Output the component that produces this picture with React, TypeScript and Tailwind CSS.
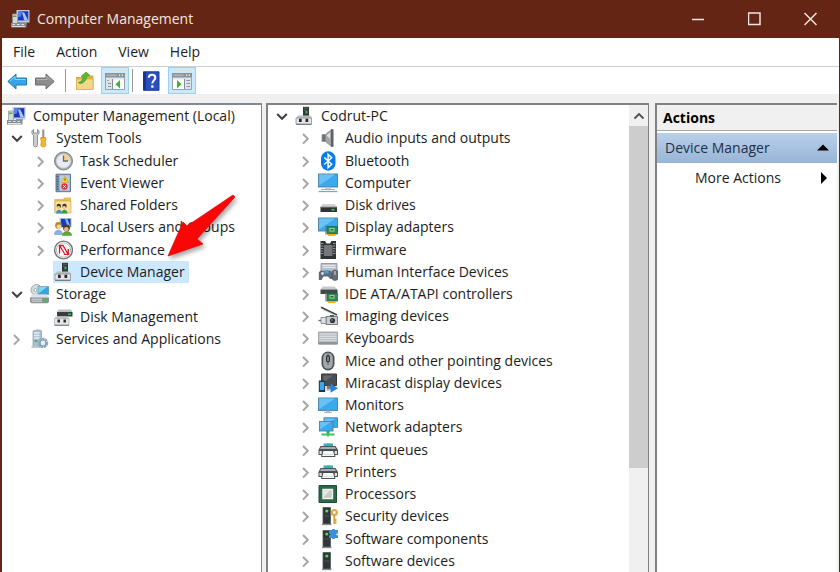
import { useState } from 'react';
import type { ReactNode } from 'react';
import clsx from 'clsx';

type Node = {
  label: string;
  icon: ReactNode;
  level: 0 | 1 | 2;
  state?: 'open' | 'closed';
};

const Svg = ({ children }: { children: ReactNode }) => (
  <svg viewBox="0 0 20 20" className="size-5 shrink-0" aria-hidden="true">
    {children}
  </svg>
);

const ManagementIcon = () => (
  <Svg>
    <path d="M6.500 1H19.500v12.500h-13z" fill="#c3ccd6" />
    <path d="M8 2.200h10.300v9.300H8z" fill="#1a36c8" />
    <path d="m8 2.200 4 0-1 5-3 1.300z" fill="#5b83e6" />
    <path d="m12 3.500 2-.2 4.300 8.200h-4z" fill="#a9c5f4" />
    <path d="M2.500 5h5v9.500h-5z" fill="#d4d8d2" stroke="#8b928c" strokeWidth=".7" />
    <path d="M3 6.500h3.500V8H3z" fill="#59a84a" />
    <path d="M10 13h7v1.500h-7z" fill="#8c98a5" />
    <path d="M1 14h15.500v4.500H1z" fill="#858e95" />
    <path d="M2.500 15.500h2.500M7 15.500h2.500M11.500 15.500H14M2 17.500h13" stroke="#dfe4e7" strokeWidth="1" />
  </Svg>
);

const ToolsIcon = () => (
  <Svg>
    <path
      d="M4.500 1.500C2.400 2.500 2.200 5.700 4.600 7.300v10.200c0 1.800 3.800 1.800 3.800 0V7.300c2.300-1.600 2.200-4.800.2-5.800v3.600H4.500z"
      fill="#cfd3d6"
      stroke="#7d8286"
      strokeWidth=".9"
    />
    <path d="M13.300 1.500h2V10h-2z" fill="#8b9094" />
    <path d="M11.800 9.500h5v2.500l-.8 1 .8 4.500c0 1.800-5 1.800-5 0l.7-4.500-.7-1z" fill="#f5b62b" stroke="#d68f12" strokeWidth=".8" />
  </Svg>
);

const ClockIcon = () => (
  <Svg>
    <circle cx="10.500" cy="10" r="9" fill="#a3a6a9" stroke="#75797d" strokeWidth=".9" />
    <circle cx="10.500" cy="10" r="7" fill="#e6ecf1" stroke="#d1d4d6" strokeWidth="1" />
    <path d="M10.500 10V3.500A6.500 6.500 0 0 1 17 10z" fill="#f8d08a" />
    <path d="M10.500 4.500V10H15" fill="none" stroke="#5d6b7a" strokeWidth="1.300" />
  </Svg>
);

const EventIcon = () => (
  <Svg>
    <path d="M3 1.200h14.500v17.500H3z" fill="#7c93aa" stroke="#627c98" />
    <path d="M6.500 2.200h10.200v15.500H6.500z" fill="#b9cee2" />
    <path d="M3.500 3.500h2M3.500 6h2M3.500 8.500h2M3.500 11h2M3.500 13.500h2M3.500 16h2" stroke="#43566a" strokeWidth=".9" />
    <path d="m12 3 3.700 6.500H8.300z" fill="#ffd42d" stroke="#c59512" strokeWidth=".5" />
    <path d="M12 5.300v2.500" stroke="#6b5200" />
    <circle cx="11.500" cy="13.500" r="3.200" fill="#d93648" />
    <path d="m10.200 12.200 2.600 2.600m0-2.600-2.600 2.600" stroke="#fff" strokeWidth=".9" />
  </Svg>
);

const SharedIcon = () => (
  <Svg>
    <path d="M1.500 4H10l1.500-1.500H18V18H1.500z" fill="#e5bd55" />
    <path d="M2 6h16v12H2z" fill="#f7e0a0" stroke="#d9ab3d" strokeWidth=".7" />
    <path d="M3 18.500c0-5 6-5 6 0z" fill="#3f93c4" />
    <path d="M8.500 18.500c0-5 6-5 6 0z" fill="#3a9c50" />
    <circle cx="5.800" cy="11" r="2.200" fill="#3f3220" />
    <circle cx="5.500" cy="12.200" r="1.500" fill="#eec597" />
    <circle cx="11.500" cy="11" r="2.200" fill="#3f3220" />
    <circle cx="11.200" cy="12.200" r="1.500" fill="#eec597" />
  </Svg>
);

const UsersIcon = () => (
  <Svg>
    <path d="M6.500 1h12v9.500h-12z" fill="#aab8c8" />
    <path d="M8 2h9.500v8H8z" fill="#1538ce" />
    <path d="m12 2 2.500.2 3 7.800h-3z" fill="#86b1f4" />
    <path d="M1 18c0-7 9-7 9 0z" fill="#8db4d8" />
    <path d="M9 18.800c0-6 10-6 10 0z" fill="#58a53c" />
    <circle cx="5.500" cy="8.500" r="3.400" fill="#b28b2c" />
    <circle cx="6" cy="9.800" r="2.300" fill="#f6d5a2" />
    <circle cx="13.500" cy="11" r="3.400" fill="#4d3928" />
    <circle cx="13.300" cy="12.300" r="2.300" fill="#e9b67f" />
  </Svg>
);

const PerformanceIcon = () => (
  <Svg>
    <circle cx="10.500" cy="10" r="8.900" fill="#fff" stroke="#6f7579" strokeWidth="1.400" />
    <circle cx="10.500" cy="10" r="7.100" fill="#fff" stroke="#b4b9bc" strokeWidth="1" />
    <path d="M6.500 5v8.500M6.500 5.500l3.500 0 5 8.500M15.300 9v5.300h-4.500M6.500 5.500l5 8" fill="none" stroke="#d71920" strokeWidth="1.300" />
  </Svg>
);

const DeviceIcon = () => (
  <Svg>
    <path d="M9 .8h6v9.500H9z" fill="#303633" />
    <path d="M10 2.200h4M10 4.200h1.500" stroke="#6b746f" strokeWidth=".8" />
    <path d="M11.500 4.500h2v3h-2z" fill="#43b05d" />
    <path d="M4 9.500h12.500l1.500 3H2z" fill="#b9bec2" />
    <path d="M2 12h15.500v6H2z" fill="#e3e5e6" stroke="#8b9093" strokeWidth=".8" />
    <path d="M5 12.800h2.700v3.200H5zM11.500 12.800h2.700v3.200h-2.700z" fill="#26292b" />
    <path d="M2 18.500h15.500" stroke="#777d80" />
  </Svg>
);

const StorageIcon = () => (
  <Svg>
    <circle cx="7.500" cy="6" r="5.500" fill="#d3dbe0" stroke="#919ca3" strokeWidth=".8" />
    <circle cx="6.500" cy="6" r="1.500" fill="#fff" stroke="#7e8a91" strokeWidth=".6" />
    <path d="M9 2.500h11v8H9z" fill="#35a6dc" stroke="#8ea4b1" strokeWidth=".9" />
    <path d="M9.500 3H18l-8.500 6.500z" fill="#84d5f4" />
    <path d="M2.500 10.500h15.500l2 3.500H1z" fill="#e0e3e5" />
    <path d="M1 13.500h19V18l-1.500 1.200h-16L1 18z" fill="#8b9195" />
    <path d="M2.500 15.200H13M2.500 17.200H13" stroke="#dfe2e4" strokeWidth="1" />
    <path d="M15 15.500h3.500v1.800H15z" fill="#34c54a" />
  </Svg>
);

const DiskManagementIcon = () => (
  <Svg>
    <path d="M5.500 2.500h12.500l1.500 2.500H4z" fill="#bcc1c4" />
    <path d="M4 5h15.500v4.500H4z" fill="#383e3f" />
    <path d="M15 6.500h3v1.500h-3z" fill="#38bd49" />
    <path d="M3 9.500h11.500l1.500 2H1.500z" fill="#c1c5c8" />
    <path d="M1.500 11.500H16v6.500H1.500z" fill="#e4e6e7" stroke="#a4a9ac" strokeWidth=".7" />
    <path d="M4.500 12.500h2.500v3H4.500zM10.500 12.500H13v3h-2.500z" fill="#2c3032" />
    <path d="M1.500 18.300H16" stroke="#74797c" />
  </Svg>
);

const ServicesIcon = () => (
  <Svg>
    <path d="m4 2 5-1.300 3.500 1.100V18H4z" fill="#a9bfcd" stroke="#7895a8" strokeWidth=".6" />
    <path d="M5 4h5.500M5 6.500h5.500M5 9h5.500" stroke="#e3eef4" strokeWidth="1.300" />
    <path d="M5.500 12h3" stroke="#38a56d" strokeWidth="1.500" />
    <path d="M2.500 17h8v2h-8z" fill="#bac9d3" />
    <circle cx="14" cy="14" r="4" fill="none" stroke="#91aabd" strokeWidth="2.500" strokeDasharray="2.300 .6" />
    <circle cx="14" cy="14" r="3" fill="#e6eff5" stroke="#7f9eb4" strokeWidth="1.200" />
  </Svg>
);

const AudioIcon = () => (
  <Svg>
    <path d="M4 6.500h3.500v7H4z" fill="#6b7073" stroke="#8e9295" strokeWidth=".8" />
    <path d="m7.500 6.500 6-5v17l-6-5z" fill="#a3a7aa" stroke="#7b8083" strokeWidth=".8" />
    <path d="m13 1.200 2.500 0v17.600H13z" fill="#5c6164" />
    <path d="m8.500 7.500 3.500-3v6z" fill="#dfe1e2" />
  </Svg>
);

const BluetoothIcon = () => (
  <Svg>
    <rect x="3" y=".3" width="14.500" height="19.400" rx="7.200" fill="#0a7bea" />
    <path d="m6.300 6.500 7.400 6.700-3.600 3.500V3.300l3.600 3.500-7.400 6.700" fill="none" stroke="#fff" strokeWidth="1.500" />
  </Svg>
);

const Screen = ({ x = 1, y = 2, w = 19, h = 13 }: { x?: number; y?: number; w?: number; h?: number }) => (
  <>
    <rect x={x} y={y} width={w} height={h} fill="#3aa9ee" stroke="#4a7fa3" strokeWidth=".9" />
    <path d={`M${x + 0.6} ${y + 0.6}h${w - 3}L${x + 0.6} ${y + h - 1.5}z`} fill="#68c2f8" />
  </>
);

const ComputerIcon = () => (
  <Svg>
    <Screen x={0.5} y={1} h={13} />
    <path d="M7 14.500h6V16H7z" fill="#c5ccd2" />
    <path d="M3 16.500h14" stroke="#a9b3bb" />
    <path d="M.5 18.500h19" stroke="#8fa3b3" strokeWidth="1.300" />
  </Svg>
);

const MonitorIcon = () => (
  <Svg>
    <Screen x={0.5} y={3} h={12.5} />
    <path d="M8 15.500h4v1.200H8z" fill="#a6afb7" />
    <path d="M6 17.300h8" stroke="#9aa5ae" />
  </Svg>
);

const DiskIcon = () => (
  <Svg>
    <path d="M4.500 9h12L19 12H2.500z" fill="#d0d3d5" />
    <path d="M2.500 12H19v5H2.500z" fill="#2e3435" />
    <path d="M2.500 12.200H19" stroke="#70767a" />
    <path d="M13.500 14h3v1.500h-3z" fill="#3fcb55" />
  </Svg>
);

const Card = () => (
  <>
    <path d="M9 9.500h10.500v7.500H9z" fill="#2c8c55" stroke="#176339" strokeWidth=".7" />
    <path d="M11.500 11h5v3.500h-5z" fill="#8ddc9c" />
    <path d="M12.500 12h3v1.500h-3z" fill="#35594a" />
    <path d="M10 17h7.500v2H10z" fill="#efae28" />
    <path d="M8 8.500v9" stroke="#697278" strokeWidth="1.100" />
  </>
);

const DisplayIcon = () => (
  <Svg>
    <Screen x={0.5} y={1} h={13} />
    <Card />
  </Svg>
);

const FirmwareIcon = () => (
  <Svg>
    <path d="M2.500 1h4.500l1.500 2.500h3.500L13.500 1H18v18H2.500z" fill="#303336" />
    <path d="M6 5h8.500v11H6z" fill="#74787b" />
    <path d="M3 3.500h2.500M3 6h2.500M3 8.500h2.500M3 11h2.500M3 13.500h2.500M15 3.500h2.500M15 6h2.500M15 8.500h2.500M15 11h2.500M15 13.500h2.500" stroke="#a9acae" strokeWidth=".8" />
  </Svg>
);

const HidIcon = () => (
  <Svg>
    <path d="M3 1.500h16V10H3z" fill="#b9bfc4" stroke="#858d93" strokeWidth=".8" />
    <path d="M4.500 3.500h13M4.500 5.500h13" stroke="#e9ecee" strokeWidth="1" />
    <path d="M.8 10.500C2 8 4 8 5.500 9h4.500c2-1.300 3.500-.5 4 2l.7 6h-2.500L10 14.500H5.500L3.500 18H.8z" fill="#626b75" />
    <circle cx="4.500" cy="11.500" r="1.400" fill="#d9e0e5" />
    <path d="M6.500 8h4v3.500h-4z" fill="#3da2e6" />
    <rect x="14" y="8" width="6" height="10.500" rx="3" fill="#666e75" stroke="#444b51" strokeWidth=".6" />
    <path d="M17 9v4" stroke="#d4d9dc" />
  </Svg>
);

const IdeIcon = () => (
  <Svg>
    <path d="M5 2.500h11.500l3 3H2.500z" fill="#c5cacd" />
    <path d="M2.500 5.500h17V10h-17z" fill="#424849" />
    <Card />
  </Svg>
);

const ImagingIcon = () => (
  <Svg>
    <path d="m3 1.200 16 7.800" stroke="#3e4346" strokeWidth="1.800" />
    <path d="m4.500 3.500 13 6" stroke="#bfc4c7" strokeWidth=".8" />
    <path d="M8 10.500h11.500v8H8z" fill="#c9cdcf" stroke="#696f73" strokeWidth=".9" />
    <path d="M3 11.500h5v6H3z" fill="#dfe2e3" stroke="#777d81" strokeWidth=".8" />
    <path d="M12 9h4v2h-4z" fill="#53595d" />
    <circle cx="14.500" cy="14.500" r="2.600" fill="#2f3538" />
    <circle cx="14" cy="14" r=".8" fill="#a4adb2" />
    <path d="M.5 14.500H3" stroke="#62686c" strokeWidth="1.300" />
  </Svg>
);

const KeyboardIcon = () => (
  <Svg>
    <path d="M.5 4h19v12H.5z" fill="#b7bcc0" stroke="#8b9196" strokeWidth=".7" />
    <path d="M1.500 6h17M1.500 8.300h17M1.500 10.500h17" stroke="#e3e6e8" strokeWidth="1.100" />
    <path d="M.5 13h19v3.500H.5z" fill="#8d959c" />
    <path d="M1 13h18" stroke="#fff" strokeWidth=".8" />
  </Svg>
);

const MouseIcon = () => (
  <Svg>
    <rect x="3.500" y=".5" width="13" height="19" rx="6.500" fill="#4a5056" />
    <rect x="5.200" y="1.800" width="9.600" height="16" rx="4.800" fill="#a0a7ad" />
    <path d="M10 2v12" stroke="#50575d" strokeWidth=".9" />
    <rect x="8" y="4" width="4" height="7.500" rx="2" fill="#2e3338" />
    <path d="M10 5.500v4.500" stroke="#cad1d6" />
  </Svg>
);

const MiracastIcon = () => (
  <Svg>
    <path d="M3.500 1h15v11.500h-15z" fill="#4b4f53" stroke="#35393c" />
    <path d="M5.500 2.500H15l-9.500 7z" fill="#64696e" />
    <path d="M9 13h4v3H9zM8 17h4" fill="#797e82" stroke="#797e82" strokeWidth=".6" />
    <path d="M.8 7.500h6.400V19H.8z" fill="#28343c" />
    <path d="M1.800 9h4.400v8H1.800z" fill="#37a7ef" />
    <path d="m12.500 10.500 7.500 4.700-7.500 4.500z" fill="#2682d9" />
  </Svg>
);

const NetworkIcon = () => (
  <Svg>
    <Screen x={6} y={0.8} w={13.5} h={9.5} />
    <Screen x={1.5} y={4.5} w={13.500} h={9.500} />
    <path d="M8.500 14h3v2.500h-3z" fill="#34a555" />
    <path d="M3.500 17.500h13M10 16v3.500" stroke="#3ac05c" strokeWidth="2" />
  </Svg>
);

const PrinterIcon = () => (
  <Svg>
    <path d="M5.500 3.500h9.500V7H5.500z" fill="#3fa6dd" />
    <path d="M9 3.500h4V6H9z" fill="#39b982" />
    <path d="M2.500 6h15l2.500 4v5H.5v-5z" fill="#4d5255" />
    <path d="M3 7h14l1 2H2z" fill="#a7adb0" />
    <path d="M5 10.500h10.500l1.500 6H3.500z" fill="#f6f8f9" stroke="#3a3f42" strokeWidth=".9" />
    <path d="M1.500 11h2.300v3H1.500zM16.700 11H19v3h-2.300z" fill="#dfe2e3" />
    <path d="M5.500 14.500h9.500" stroke="#d2dfe6" />
  </Svg>
);

const ProcessorIcon = () => (
  <Svg>
    <path d="M1 1.500h17.500v17H1z" fill="#2c6847" stroke="#1b5033" />
    <path d="M5 5.500h9.500v9H5z" fill="#c8ccc9" stroke="#f1f3f1" strokeWidth="1.400" />
    <path d="m6 6.500 6 0-6 6z" fill="#e6e9e7" />
  </Svg>
);

const Tower = () => (
  <>
    <path d="M5 1.500h7.500V18H5z" fill="#303536" stroke="#52585a" strokeWidth=".8" />
    <circle cx="8.800" cy="5" r="1.600" fill="#4ddd5c" />
    <path d="M6.500 10h4.500" stroke="#5b6163" strokeWidth=".8" />
    <path d="M4 18.500h9.500" stroke="#858b8e" strokeWidth="1.300" />
  </>
);

const SecurityIcon = () => (
  <Svg>
    <Tower />
    <circle cx="16.300" cy="6.500" r="2.500" fill="none" stroke="#e3a940" strokeWidth="2.200" />
    <path d="M16.300 9v9M16.300 14h2.200M16.300 16.500h2.200" stroke="#d9a036" strokeWidth="1.800" />
  </Svg>
);

const ComponentIcon = () => (
  <Svg>
    <Tower />
    <path d="M11 1h3.200V0h2.600v1H20v3.500h-1.500v1.700H20V9h-3.200v1h-2.600V9H11V6.200h1.500V4.500H11z" fill="#3a8edb" />
  </Svg>
);

const SoftwareIcon = () => (
  <Svg>
    <Tower />
  </Svg>
);

const consoleTree: Node[] = [
  { label: 'Computer Management (Local)', icon: <ManagementIcon />, level: 0 },
  { label: 'System Tools', icon: <ToolsIcon />, level: 1, state: 'open' },
  { label: 'Task Scheduler', icon: <ClockIcon />, level: 2, state: 'closed' },
  { label: 'Event Viewer', icon: <EventIcon />, level: 2, state: 'closed' },
  { label: 'Shared Folders', icon: <SharedIcon />, level: 2, state: 'closed' },
  { label: 'Local Users and Groups', icon: <UsersIcon />, level: 2, state: 'closed' },
  { label: 'Performance', icon: <PerformanceIcon />, level: 2, state: 'closed' },
  { label: 'Device Manager', icon: <DeviceIcon />, level: 2 },
  { label: 'Storage', icon: <StorageIcon />, level: 1, state: 'open' },
  { label: 'Disk Management', icon: <DiskManagementIcon />, level: 2 },
  { label: 'Services and Applications', icon: <ServicesIcon />, level: 1, state: 'closed' },
];

const deviceTree: Node[] = [
  { label: 'Codrut-PC', icon: <DeviceIcon />, level: 1, state: 'open' },
  { label: 'Audio inputs and outputs', icon: <AudioIcon />, level: 2, state: 'closed' },
  { label: 'Bluetooth', icon: <BluetoothIcon />, level: 2, state: 'closed' },
  { label: 'Computer', icon: <ComputerIcon />, level: 2, state: 'closed' },
  { label: 'Disk drives', icon: <DiskIcon />, level: 2, state: 'closed' },
  { label: 'Display adapters', icon: <DisplayIcon />, level: 2, state: 'closed' },
  { label: 'Firmware', icon: <FirmwareIcon />, level: 2, state: 'closed' },
  { label: 'Human Interface Devices', icon: <HidIcon />, level: 2, state: 'closed' },
  { label: 'IDE ATA/ATAPI controllers', icon: <IdeIcon />, level: 2, state: 'closed' },
  { label: 'Imaging devices', icon: <ImagingIcon />, level: 2, state: 'closed' },
  { label: 'Keyboards', icon: <KeyboardIcon />, level: 2, state: 'closed' },
  { label: 'Mice and other pointing devices', icon: <MouseIcon />, level: 2, state: 'closed' },
  { label: 'Miracast display devices', icon: <MiracastIcon />, level: 2, state: 'closed' },
  { label: 'Monitors', icon: <MonitorIcon />, level: 2, state: 'closed' },
  { label: 'Network adapters', icon: <NetworkIcon />, level: 2, state: 'closed' },
  { label: 'Print queues', icon: <PrinterIcon />, level: 2, state: 'closed' },
  { label: 'Printers', icon: <PrinterIcon />, level: 2, state: 'closed' },
  { label: 'Processors', icon: <ProcessorIcon />, level: 2, state: 'closed' },
  { label: 'Security devices', icon: <SecurityIcon />, level: 2, state: 'closed' },
  { label: 'Software components', icon: <ComponentIcon />, level: 2, state: 'closed' },
  { label: 'Software devices', icon: <SoftwareIcon />, level: 2, state: 'closed' },
];

function TreeRow({ node, selected, onSelect }: { node: Node; selected: boolean; onSelect: () => void }) {
  return (
    <li className={clsx('flex min-h-0 items-center', node.level === 2 && 'pl-6')}>
      {node.level > 0 &&
        (node.state ? (
          <button className="flex w-6 shrink-0 justify-center" aria-label={`Toggle ${node.label}`}>
            <svg viewBox="0 0 12 12" className="size-3" fill="none" aria-hidden="true">
              {node.state === 'open' ? (
                <path d="M1.200 4 6 8.800 10.800 4" stroke="#404040" strokeWidth="2" />
              ) : (
                <path d="m3 2 4.800 4.800L3 11.600" stroke="#a6a6a6" strokeWidth="2" />
              )}
            </svg>
          </button>
        ) : (
          <span className="w-6 shrink-0" />
        ))}
      <button
        onClick={onSelect}
        className={clsx(
          'flex h-full items-center gap-[7px] pr-1 whitespace-nowrap',
          node.level === 0 && 'pl-px',
          selected && 'bg-[#cce8ff]'
        )}
      >
        {node.icon}
        {node.label}
      </button>
    </li>
  );
}

// window glyph with the tree (or the action list) shown beside the content
function PaneIcon({ flip = false }: { flip?: boolean }) {
  return (
    <svg viewBox="0 0 20 18" className="h-[18px] w-5" aria-hidden="true">
      <path d="M.5 1.500h19v16H.5z" fill="#dfe4e8" stroke="#9ba3a9" />
      <path d="M0 1h20v4.500H0z" fill="#8b949b" />
      <path d="M1.500 3.200h10" stroke="#b6bdc2" strokeWidth="1.200" />
      <path d="M14 3.200h1.200M16.800 3.200H18" stroke="#fff" strokeWidth="1.200" />
      {flip ? (
        <>
          <path d="M1 7.500h11v9.500H1z" fill="#fff" />
          <path d="M12.500 7v10" stroke="#858d93" />
          <path d="M14.500 8.500h3.500M14.500 11.500h3.500M14.500 14.500h3.500" stroke="#7c93a8" strokeWidth="1.200" />
          <path d="m5 8 4.500 4.200L5 16.400z" fill="#3cb52f" />
        </>
      ) : (
        <>
          <path d="M8 7.500h11v9.500H8z" fill="#fff" />
          <path d="M7.500 7v10" stroke="#858d93" />
          <path d="M2 8.500h1.500M3 11.500h3M3 14.500h3" stroke="#7c93a8" strokeWidth="1.200" />
          <path d="m15 8-4.500 4.200 4.500 4.200z" fill="#3cb52f" />
        </>
      )}
    </svg>
  );
}

const Divider = () => <span className="mx-[3px] h-[23px] w-px bg-[#989898]" />;

export default function App() {
  const [selected, setSelected] = useState('Device Manager');

  return (
    <div className="flex h-dvh flex-col overflow-hidden border-r border-l-2 border-[#642515] bg-[#f0f0f0] font-['Open_Sans','Noto_Sans',sans-serif] text-sm text-[#1c1c1c]">
      {/* Title bar */}
      <header className="flex h-[38px] shrink-0 items-center bg-[#642515] pl-2 text-[#f3e5df]">
        <ManagementIcon />
        <h1 className="ml-[7px] flex-1 text-sm">Computer Management</h1>
        <button className="flex h-full w-14 items-center justify-center" aria-label="Minimize">
          <svg viewBox="0 0 14 14" className="size-3.5" stroke="currentColor" strokeWidth="1.500" fill="none">
            <path d="M0 7.500h12" />
          </svg>
        </button>
        <button className="flex h-full w-14 items-center justify-center" aria-label="Maximize">
          <svg viewBox="0 0 14 14" className="size-3.5" stroke="currentColor" strokeWidth="1.500" fill="none">
            <path d="M.5 1h11.500v11.500H.5z" />
          </svg>
        </button>
        <button className="flex h-full w-14 items-center justify-center" aria-label="Close">
          <svg viewBox="0 0 14 14" className="size-3.5" stroke="currentColor" strokeWidth="1.500" fill="none">
            <path d="m.5 1 12 12M12.500 1l-12 12" />
          </svg>
        </button>
      </header>

      {/* Menu */}
      <nav className="flex h-[29px] shrink-0 items-center gap-[21px] border-b border-[#cfcfcf] bg-white pl-[11px]">
        {['File', 'Action', 'View', 'Help'].map((item) => (
          <button key={item}>{item}</button>
        ))}
      </nav>

      {/* Toolbar */}
      <div className="flex h-[27px] shrink-0 items-center bg-white pl-1">
        <button className="flex w-7 pl-px" aria-label="Back">
          <svg viewBox="0 0 20 18" className="h-[18px] w-5" aria-hidden="true">
            <path d="M.8 9.500 9 2v4h10.500v7H9v4z" fill="#35a5e5" stroke="#247bb5" />
            <path d="M3 9 8 4.500v3h10.500" fill="none" stroke="#8ad4f8" />
          </svg>
        </button>
        <button className="flex w-7 pl-px" aria-label="Forward">
          <svg viewBox="0 0 20 18" className="h-[18px] w-5" aria-hidden="true">
            <path d="M19.200 9.500 11 2v4H.5v7H11v4z" fill="#8d8d8d" stroke="#6d6d6d" />
            <path d="M1.500 7.500H12v-3l4 4" fill="none" stroke="#b4b4b4" />
          </svg>
        </button>
        <Divider />
        <button className="flex w-8 justify-center" aria-label="Up one level">
          <svg viewBox="0 0 20 20" className="size-5" aria-hidden="true">
            <path d="M1 6h8l1.500-1.500H18.500v14H1z" fill="#dcae42" />
            <path d="M1.500 8h16.500v10.500H1.500z" fill="#f4d789" stroke="#d9ae50" strokeWidth=".8" />
            <path d="M3.500 11.500C7 10.500 8 8 8 5L6 5.500 11 1l4 3.500-3 .2c-.5 5-4 8-7.500 7.800z" fill="#58b936" stroke="#3d9b28" strokeWidth=".7" />
          </svg>
        </button>
        <button className="flex h-full w-7 items-center justify-center border border-[#9bd1f5] bg-[#cce8fb]" aria-label="Show or hide console tree">
          <PaneIcon />
        </button>
        <Divider />
        <button className="flex w-8 justify-center" aria-label="Help">
          <svg viewBox="0 0 20 20" className="size-5" aria-hidden="true">
            <path d="M1.500.8h15.500v18.500H1.500z" fill="#2a50c0" stroke="#1d3a95" />
            <path d="M3 1v18" stroke="#16307f" strokeWidth="1.600" />
            <path d="M6.800 6.800c0-4 6.500-4 6.500 0 0 2.500-3 2.700-3 5.700" fill="none" stroke="#fff" strokeWidth="2" />
            <path d="M9.200 14.300h2.300v2.400H9.200z" fill="#fff" />
          </svg>
        </button>
        <button className="flex h-full w-7 items-center justify-center border border-[#9bd1f5] bg-[#cce8fb]" aria-label="Show or hide action pane">
          <PaneIcon flip />
        </button>
      </div>

      <main className="mt-[9px] flex min-h-0 flex-1">
        {/* Console tree */}
        <section className="relative w-[260px] shrink-0 border-t-2 border-r border-[#828790] bg-white pl-[3px]" aria-label="Console tree">
          <ul className="grid h-[245px] auto-rows-fr">
            {consoleTree.map((node) => (
              <TreeRow
                key={node.label}
                node={node}
                selected={selected === node.label}
                onSelect={() => setSelected(node.label)}
              />
            ))}
          </ul>
          {/* Pointer over the tree */}
          <svg
            viewBox="0 0 72 68"
            className="pointer-events-none absolute top-[88px] left-[164px] h-[68px] w-[72px] drop-shadow-[2px_3px_2px_rgba(0,0,0,0.35)]"
            aria-hidden="true"
          >
            <path d="M67 2 21 33l-4-4L2 63l35-12-6-5L69 4z" fill="#f90606" stroke="#e80000" strokeWidth=".7" />
          </svg>
        </section>

        {/* Devices */}
        <section className="ml-1 flex min-w-0 flex-1 border-t-2 border-r border-l-2 border-[#828282] bg-white pl-0.5" aria-label="Devices">
          <ul className="grid h-[467px] flex-1 auto-rows-fr">
            {deviceTree.map((node) => (
              <TreeRow key={node.label} node={node} selected={false} onSelect={() => setSelected(node.label)} />
            ))}
          </ul>
          <div className="flex w-[19px] flex-col bg-[#f0f0f0]">
            <button className="flex h-[21px] items-center justify-center" aria-label="Scroll up">
              <svg viewBox="0 0 12 12" className="size-3" fill="none" aria-hidden="true">
                <path d="M1.500 8.500 6 4l4.500 4.500" stroke="#505050" strokeWidth="1.800" />
              </svg>
            </button>
            <div className="h-[342px] bg-[#cdcdcd]" />
          </div>
        </section>

        {/* Actions */}
        <aside className="mr-0.5 ml-1.5 w-[182px] shrink-0 border-t-2 border-l-2 border-[#828282] bg-white">
          <h2 className="flex h-[26px] items-center border-b border-[#a8a8a8] bg-[#f0f0f0] pl-1.5 font-bold text-black">
            Actions
          </h2>
          <button className="mt-0.5 flex h-[30px] w-full items-center justify-between bg-linear-to-b from-[#b9d0ea] to-[#98b4d6] px-2 text-[#1e2f4a]">
            Device Manager
            <svg viewBox="0 0 12 12" className="size-3" aria-hidden="true">
              <path d="M0 8.500 6 2.500l6 6z" fill="#000" />
            </svg>
          </button>
          <button className="flex h-[30px] w-full items-center justify-between pr-2 pl-[38px]">
            More Actions
            <svg viewBox="0 0 12 12" className="size-3" aria-hidden="true">
              <path d="m4 0 6 6-6 6z" fill="#000" />
            </svg>
          </button>
        </aside>
      </main>
    </div>
  );
}
